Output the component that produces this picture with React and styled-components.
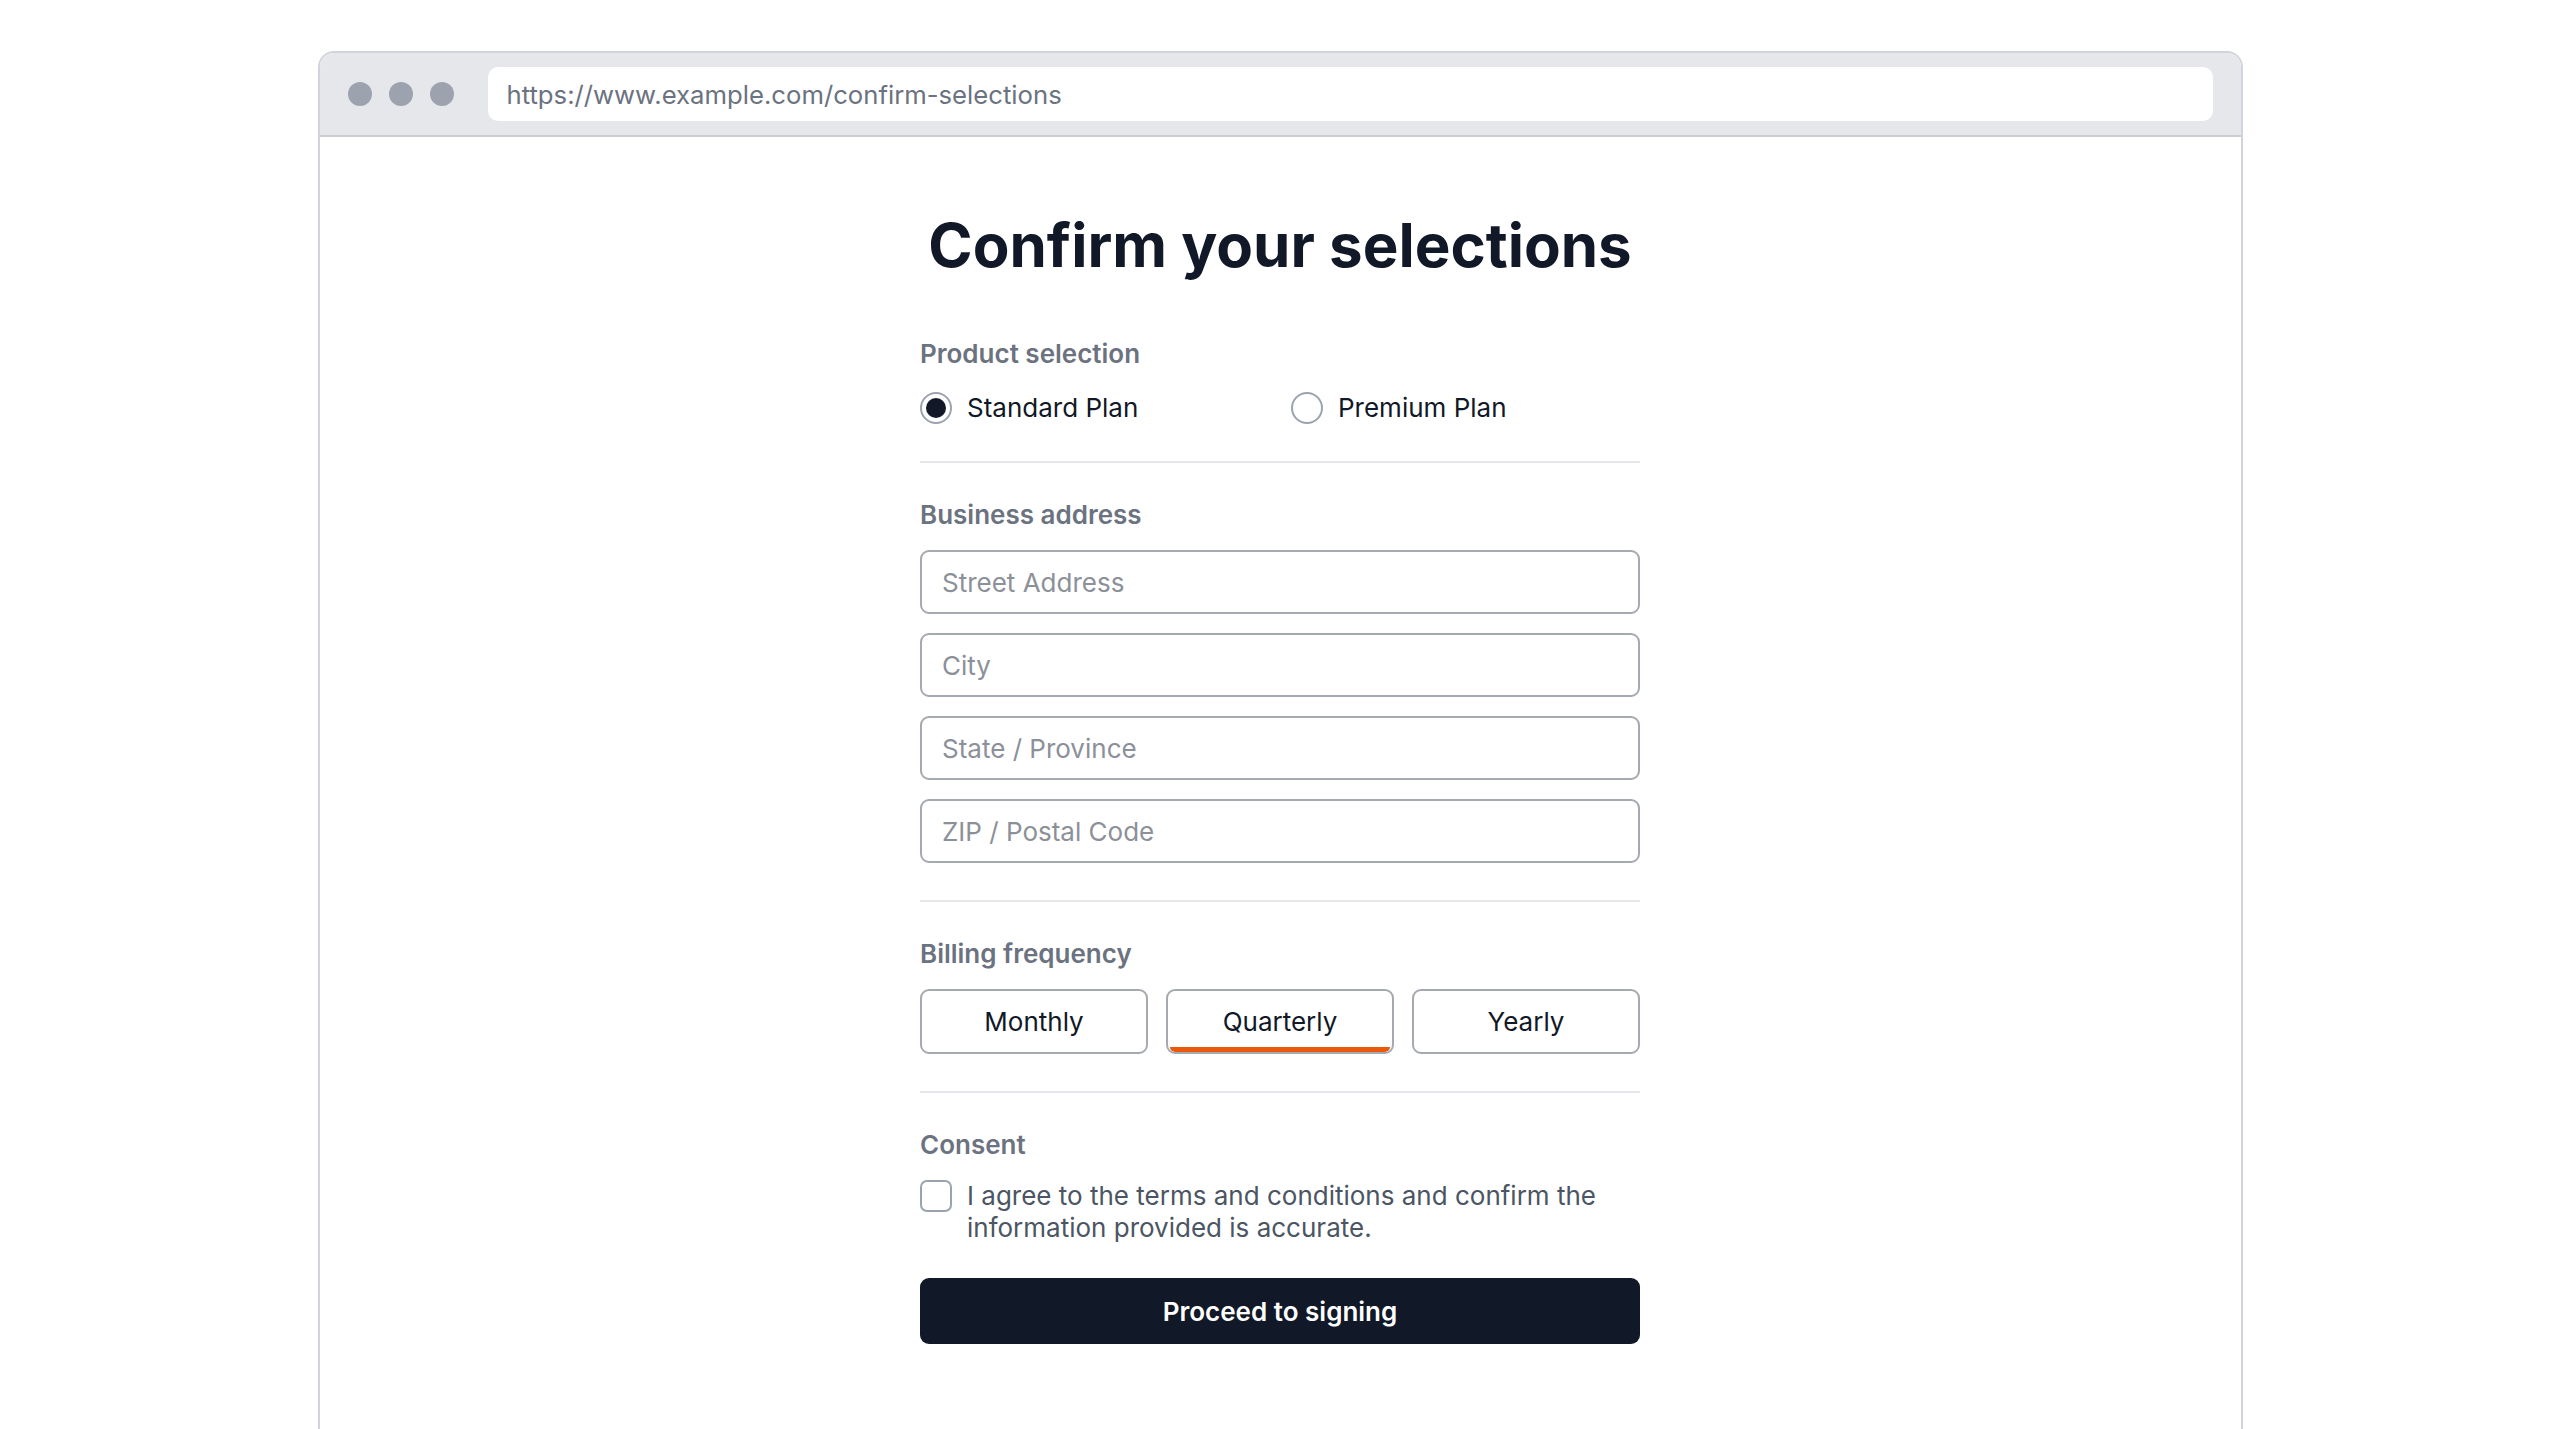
import React, { useState } from 'react';
import styled, { createGlobalStyle } from 'styled-components';

const GlobalStyle = createGlobalStyle`
  html, body {
    margin: 0;
    padding: 0;
    background: #ffffff;
    overflow: hidden;
  }
  body {
    font-family: Inter, "Noto Sans", "Liberation Sans", sans-serif;
    color: #111827;
  }
  * {
    box-sizing: border-box;
  }
`;

function App() {
  const [plan, setPlan] = useState('standard');
  const [billing, setBilling] = useState('quarterly');
  const [agreed, setAgreed] = useState(false);

  const renderPlanOption = (value, label) => {
    return (
      <RadioOption key={value} onClick={() => setPlan(value)}>
        <RadioCircle checked={plan === value} />
        <OptionText>{label}</OptionText>
      </RadioOption>
    );
  };

  const renderBillingOption = (value, label) => {
    return (
      <SegmentButton
        key={value}
        type="button"
        active={billing === value}
        onClick={() => setBilling(value)}
      >
        {label}
      </SegmentButton>
    );
  };

  return (
    <React.Fragment>
      <GlobalStyle />
      <BrowserWindow>
        <Toolbar>
          <Dots>
            <Dot />
            <Dot />
            <Dot />
          </Dots>
          <UrlBar>https://www.example.com/confirm-selections</UrlBar>
        </Toolbar>

        <Content>
          <Title>Confirm your selections</Title>

          <Section>
            <SectionLabel>Product selection</SectionLabel>
            <RadioGroup>
              {renderPlanOption('standard', 'Standard Plan')}
              {renderPlanOption('premium', 'Premium Plan')}
            </RadioGroup>
          </Section>

          <Divider />

          <Section>
            <SectionLabel>Business address</SectionLabel>
            <Fields>
              <TextInput placeholder="Street Address" />
              <TextInput placeholder="City" />
              <TextInput placeholder="State / Province" />
              <TextInput placeholder="ZIP / Postal Code" />
            </Fields>
          </Section>

          <Divider />

          <Section>
            <SectionLabel>Billing frequency</SectionLabel>
            <SegmentGroup>
              {renderBillingOption('monthly', 'Monthly')}
              {renderBillingOption('quarterly', 'Quarterly')}
              {renderBillingOption('yearly', 'Yearly')}
            </SegmentGroup>
          </Section>

          <Divider />

          <Section>
            <SectionLabel>Consent</SectionLabel>
            <ConsentRow onClick={() => setAgreed(!agreed)}>
              <CheckBox checked={agreed} />
              <ConsentText>
                I agree to the terms and conditions and confirm the information
                provided is accurate.
              </ConsentText>
            </ConsentRow>
          </Section>

          <SubmitButton type="button">Proceed to signing</SubmitButton>
        </Content>
      </BrowserWindow>
    </React.Fragment>
  );
}

const BrowserWindow = styled.div`
  width: 1925px;
  min-height: 1420px;
  margin: 51px auto 0;
  border: 2px solid #d1d5db;
  border-bottom: none;
  border-radius: 16px 16px 0 0;
  background: #ffffff;
  overflow: hidden;
`;

const Toolbar = styled.div`
  height: 84px;
  display: flex;
  align-items: center;
  gap: 34px;
  padding: 0 28px;
  background: #e5e7eb;
  border-bottom: 2px solid #c9ccd1;
`;

const Dots = styled.div`
  display: flex;
  gap: 17px;
`;

const Dot = styled.span`
  width: 24px;
  height: 24px;
  border-radius: 50%;
  background: #9ca3af;
`;

const UrlBar = styled.div`
  flex: 1;
  height: 54px;
  display: flex;
  align-items: center;
  padding: 0 19px;
  border-radius: 10px;
  background: #ffffff;
  color: #6b7280;
  font-size: 25.7px;
`;

const Content = styled.div`
  width: 720px;
  margin: 0 auto;
  padding-top: 72px;
  display: flex;
  flex-direction: column;
`;

const Title = styled.h1`
  margin: 0 0 53px;
  font-size: 60px;
  line-height: 72px;
  font-weight: 700;
  letter-spacing: 0;
  text-align: center;
  color: #111827;
`;

const Section = styled.div`
  display: flex;
  flex-direction: column;
  gap: 16px;
`;

const SectionLabel = styled.div`
  font-size: 26px;
  line-height: 39px;
  font-weight: 600;
  color: #6b7280;
`;

const RadioGroup = styled.div`
  display: grid;
  grid-template-columns: 1fr 1fr;
  gap: 22px;
  margin-top: 3px;
`;

const RadioOption = styled.label`
  display: flex;
  align-items: center;
  gap: 15px;
  cursor: pointer;
`;

const RadioCircle = styled.span`
  width: 32px;
  height: 32px;
  flex-shrink: 0;
  border-radius: 50%;
  border: 2px solid #9ca3af;
  display: flex;
  align-items: center;
  justify-content: center;

  &::before {
    content: '';
    width: 20px;
    height: 20px;
    border-radius: 50%;
    background: ${(props) => (props.checked ? '#111827' : 'transparent')};
  }
`;

const OptionText = styled.span`
  font-size: 26px;
  line-height: 32px;
  color: #111827;
`;

const Divider = styled.hr`
  width: 100%;
  margin: 37px 0 32px;
  border: none;
  border-top: 2px solid #e5e7eb;
`;

const Fields = styled.div`
  display: flex;
  flex-direction: column;
  gap: 19px;
`;

const TextInput = styled.input`
  width: 100%;
  height: 64px;
  padding: 0 20px;
  border: 2px solid #a5a9b0;
  border-radius: 9px;
  font-family: inherit;
  font-size: 26px;
  color: #111827;
  background: #ffffff;
  outline: none;

  &::placeholder {
    color: #8b9099;
  }
`;

const SegmentGroup = styled.div`
  display: grid;
  grid-template-columns: repeat(3, 1fr);
  gap: 18px;
`;

const SegmentButton = styled.button`
  position: relative;
  height: 65px;
  border: 2px solid #a5a9b0;
  border-radius: 9px;
  background: #ffffff;
  font-family: inherit;
  font-size: 26px;
  color: #111827;
  cursor: pointer;
  overflow: hidden;

  &::after {
    content: '';
    display: ${(props) => (props.active ? 'block' : 'none')};
    position: absolute;
    left: 2px;
    right: 2px;
    bottom: 0;
    height: 5px;
    border-radius: 0 0 6px 6px;
    background: #ea580c;
  }
`;

const ConsentRow = styled.label`
  display: flex;
  align-items: flex-start;
  gap: 15px;
  cursor: pointer;
`;

const CheckBox = styled.span`
  width: 32px;
  height: 32px;
  flex-shrink: 0;
  border: 2px solid #9ca3af;
  border-radius: 7px;
  background: ${(props) => (props.checked ? '#111827' : '#ffffff')};
`;

const ConsentText = styled.span`
  font-size: 26px;
  line-height: 32px;
  color: #4b5563;
`;

const SubmitButton = styled.button`
  margin-top: 34px;
  height: 66px;
  border: none;
  border-radius: 9px;
  background: #111827;
  color: #ffffff;
  font-family: inherit;
  font-size: 26px;
  font-weight: 600;
  cursor: pointer;
`;

export default App;
